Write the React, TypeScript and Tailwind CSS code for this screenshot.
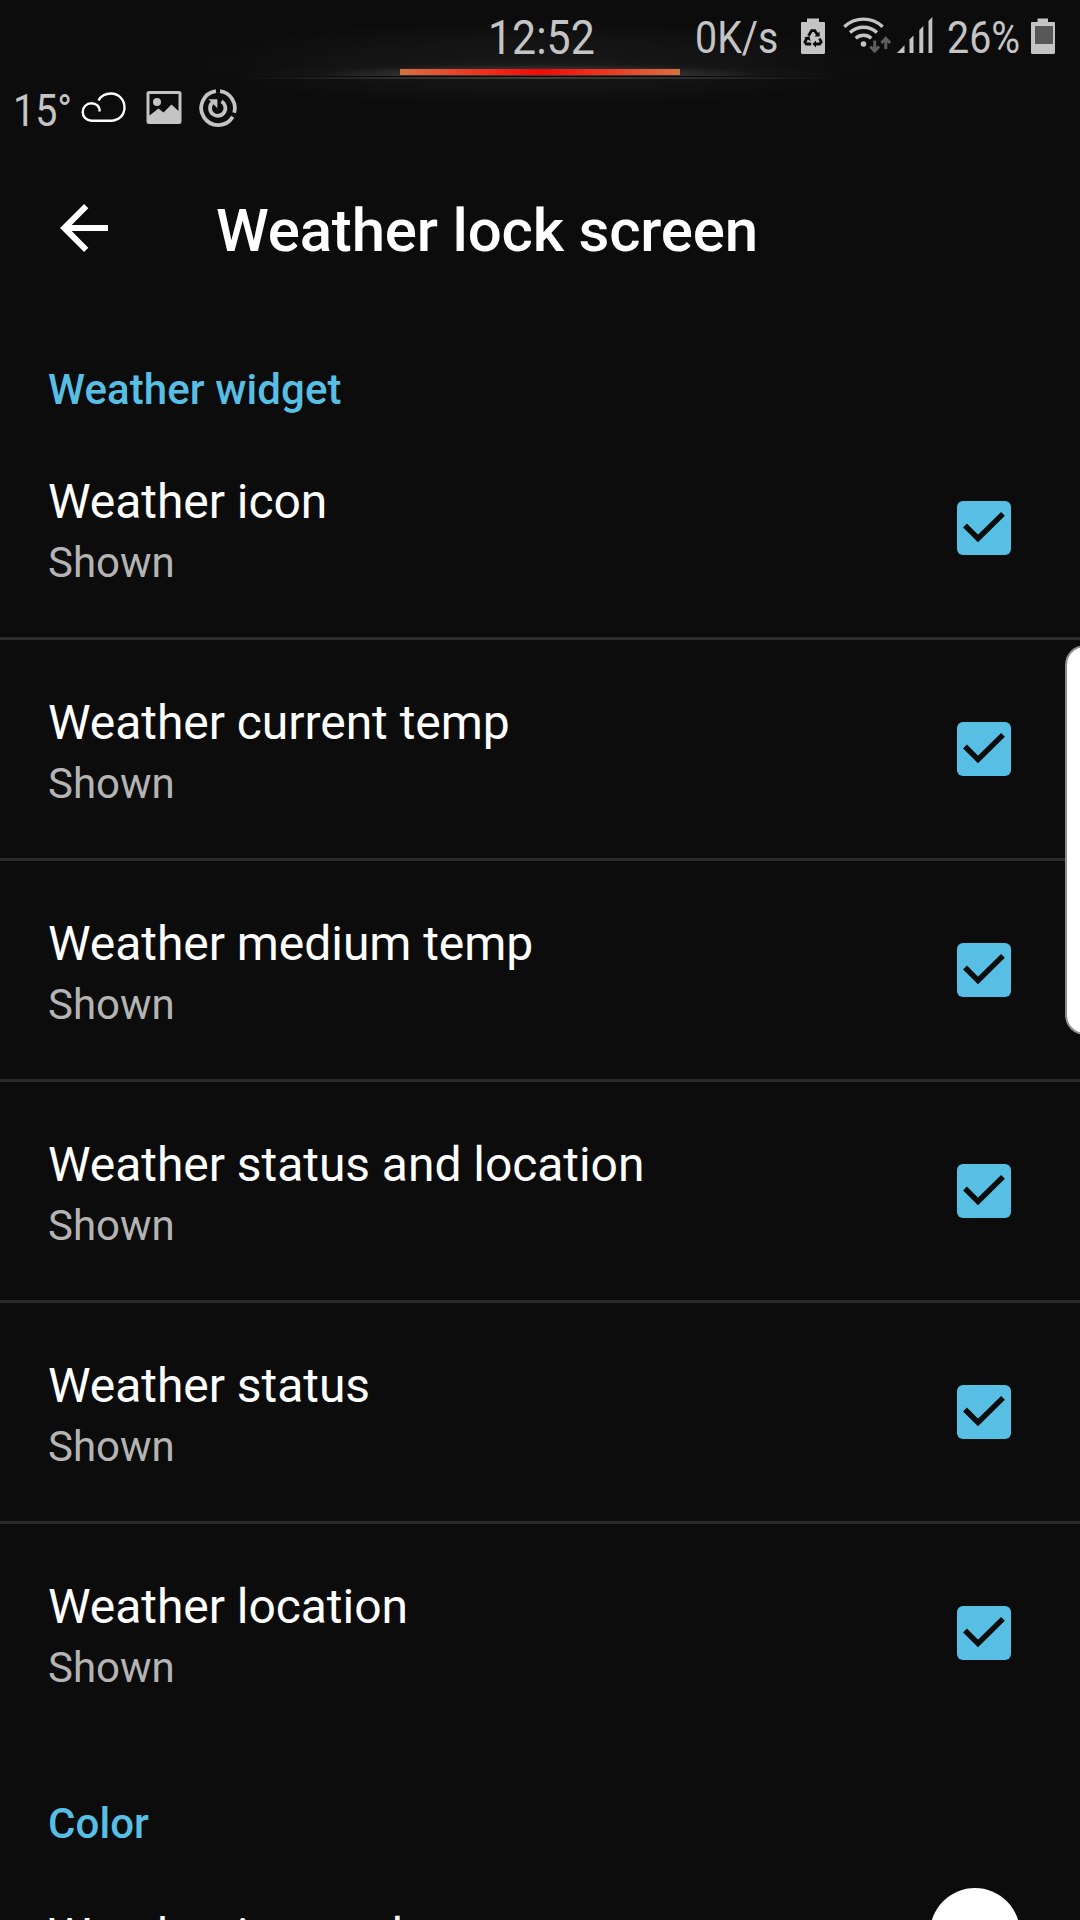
import React from "react";

const WIDGET_ROWS = [
  "Weather icon",
  "Weather current temp",
  "Weather medium temp",
  "Weather status and location",
  "Weather status",
  "Weather location",
];

function CloudIcon() {
  return (
    <svg width="46" height="32" viewBox="0 0 46 32" fill="none" stroke="#fff" strokeWidth="2.400" strokeLinecap="butt">
      <path d="M18.500 19.500C19 14.500 15 11.200 10.500 11.200C5.500 11.200 1.700 15 1.700 20C1.700 25 5.500 28.700 10.500 28.700H30C38 28.700 43.500 23 43.500 15.500C43.500 7.500 37.500 1.500 30 1.500C24.500 1.500 20 4 17.500 8.500" />
    </svg>
  );
}

function PictureIcon() {
  return (
    <svg width="36" height="33" viewBox="0 0 36 33">
      <path
        fill="#c4c4c4"
        fillRule="evenodd"
        d="M3 0H33Q35.500 0 35.500 2.500V30.500Q35.500 33 33 33H3Q.5 33 .5 30.500V2.500Q.5 0 3 0ZM3.500 3V24.500L12.500 17.500L17.500 21.500L25.500 13.500L32.500 20V3Z"
      />
      <circle cx="11" cy="11" r="4" fill="#c4c4c4" />
    </svg>
  );
}

function RestoreIcon() {
  return (
    <svg width="38" height="38" viewBox="0 0 38 38" fill="none" stroke="#c4c4c4">
      <g strokeWidth="3.800">
        <path d="M17 2.200A17 17 0 1 0 33.800 27.800" />
        <path d="M21 2.200A17 17 0 0 1 35.200 23.700" />
        <path d="M13.200 13.800A7.700 7.700 0 1 0 22.500 12.400" />
      </g>
      <path d="M9.500 10.300H18.400V19.200Z" fill="#c4c4c4" stroke="none" />
    </svg>
  );
}

function RecycleBatteryIcon() {
  return (
    <svg width="24" height="36" viewBox="0 0 24 36">
      <path fill="#c4c4c4" d="M6 0.500H18V4H23.200Q24 4 24 4.800V34.500Q24 36 22.500 36H1.500Q0 36 0 34.500V4.800Q0 4 .8 4H6Z" />
      <g fill="none" stroke="#0c0c0c" strokeWidth="2.800">
        <path d="M7.500 17.800L10.600 12.700H13.800L16.600 17" />
        <path d="M18.500 20.500L20.200 24L18.600 26H13.500" />
        <path d="M10.200 26H5.300L3.900 24L6.300 19.500" />
      </g>
      <g fill="#0c0c0c">
        <path d="M13.500 18.500L18.800 18.500L18.500 13.500Z" />
        <path d="M15 22.500V29.500L11.500 26Z" />
        <path d="M3 19.500L8.500 18.200L9.500 23Z" />
      </g>
    </svg>
  );
}

function WifiIcon() {
  return (
    <svg width="50" height="38" viewBox="0 0 50 38" fill="none" stroke="#c4c4c4" strokeWidth="3.300">
      <path d="M1.300 9.700A28 28 0 0 1 39.700 9.700" />
      <path d="M7 15.500A20 20 0 0 1 34 15.500" />
      <path d="M12.700 21.300A11.500 11.500 0 0 1 28.300 21.300" />
      <circle cx="20.500" cy="27" r="2.800" fill="#c4c4c4" stroke="none" />
      <g stroke="#5e5e5e" strokeWidth="3">
        <path d="M31.700 23.500V34M27.300 29.500L31.700 34L36.100 29.500" />
        <path d="M42.800 32V21.500M38.400 26L42.800 21.500L47.200 26" />
      </g>
    </svg>
  );
}

function SignalIcon() {
  return (
    <svg width="36" height="36" viewBox="0 0 36 36" fill="#c4c4c4">
      <path d="M0 36L7.500 28.300V36Z" />
      <path d="M12.500 22.500L16.500 18.500V36H12.500Z" />
      <path d="M22.300 13L26.300 9V36H22.300Z" />
      <path d="M31.500 4L35.300 0V36H31.500Z" />
    </svg>
  );
}

function BatteryIcon() {
  return (
    <svg width="24" height="36" viewBox="0 0 24 36">
      <path fill="#c4c4c4" d="M6.500 0.500H17V4H23.200Q24 4 24 4.800V34.500Q24 36 22.500 36H1.500Q0 36 0 34.500V4.800Q0 4 .8 4H6.500Z" />
      <rect x="4" y="8" width="18" height="18" fill="#585858" />
    </svg>
  );
}

function StatusText({ children, className }: { children: string; className: string }) {
  return (
    <div className={`shrink-0 whitespace-nowrap text-[#c4c4c4] ${className}`}>
      <span className="inline-block origin-left scale-x-[0.875]">{children}</span>
    </div>
  );
}

function StatusBar() {
  return (
    <header className="relative h-[150px]">
      <div className="absolute left-[180px] top-[20px] h-[88px] w-[720px] bg-[radial-gradient(closest-side,#181818_0%,#131313_55%,#0c0c0c00_100%)]" />
      <div className="absolute left-[240px] top-[60px] h-[16px] w-[600px] overflow-hidden">
        <div className="h-[32px] w-full bg-[radial-gradient(closest-side,#3a3a3a_0%,#303030_45%,#1a1a1a88_75%,transparent_100%)]" />
      </div>
      <div className="absolute left-[240px] top-[76px] h-px w-[600px] bg-[linear-gradient(to_right,transparent,#0a0a0a_20%,#0a0a0a_80%,transparent)]" />
      <div className="absolute left-[240px] top-[77px] h-[2px] w-[600px] bg-[linear-gradient(to_right,transparent,#2c2c2c_25%,#403c36_50%,#2c2c2c_75%,transparent)]" />
      <div className="absolute left-[400px] top-[69px] h-[6px] w-[280px] bg-[linear-gradient(to_right,#d8713f,#ee2f1c_30%,#f40808_50%,#ee2f1c_70%,#d8713f)]" />
      <div className="relative flex h-[74px] items-start">
        <StatusText className="ml-[488px] mt-[10px] w-[108px] text-[49px] leading-[56px]">12:52</StatusText>
        <StatusText className="ml-[99px] mt-[10px] w-[106px] text-[45px] leading-[56px]">0K/s</StatusText>
        <div className="mt-[18px] shrink-0"><RecycleBatteryIcon /></div>
        <div className="ml-[18px] mt-[17px] shrink-0"><WifiIcon /></div>
        <div className="ml-[4px] mt-[17px] shrink-0"><SignalIcon /></div>
        <StatusText className="ml-[14px] mt-[10px] w-[84px] text-[45px] leading-[56px]">26%</StatusText>
        <div className="mt-[18px] shrink-0"><BatteryIcon /></div>
      </div>
      <div className="relative flex items-start">
        <StatusText className="ml-[13px] mt-[9px] w-[68px] text-[45px] leading-[56px]">15°</StatusText>
        <div className="mt-[18px]"><CloudIcon /></div>
        <div className="ml-[19px] mt-[17px]"><PictureIcon /></div>
        <div className="ml-[17px] mt-[15px]"><RestoreIcon /></div>
      </div>
    </header>
  );
}

function SectionTitle({ children }: { children: string }) {
  return (
    <h2 className="pl-12 text-[42px] font-medium leading-[50px] tracking-[0.08px] text-[#57bee4]">{children}</h2>
  );
}

function CheckBox() {
  return (
    <div className="h-[54px] w-[54px] rounded-[6px] bg-[#57bee4]">
      <svg width="54" height="54" viewBox="0 0 54 54" fill="none" stroke="#0c0c0c" strokeWidth="5.400">
        <path d="M8 24.500L21 37.500L46 12.800" />
      </svg>
    </div>
  );
}

export default function App() {
  return (
    <main className="relative h-[1920px] w-[1080px] overflow-hidden bg-[#0c0c0c] font-['Roboto',sans-serif] text-white">
      <StatusBar />
      <div className="flex h-[156px] items-center pl-[60px]">
        <svg className="shrink-0" width="48" height="48" viewBox="0 0 48 48" fill="none" stroke="#fff" strokeWidth="6">
          <path d="M48 24H4M26.200 2.200L4.300 24L26.200 45.800" />
        </svg>
        <h1 className="ml-[108px] mt-[6px] text-[60px] font-medium leading-[72px] tracking-[-0.18px]">
          Weather lock screen
        </h1>
      </div>
      <section className="pt-[59px]">
        <SectionTitle>Weather widget</SectionTitle>
        <ul className="mt-[4px]">
          {WIDGET_ROWS.map((title) => (
            <li
              key={title}
              className="flex h-[221px] items-center justify-between border-b-[3px] border-[#2b2b2b] pl-12 pr-[69px] last:h-[218px] last:border-b-0"
            >
              <div className="pt-1.5">
                <div className="text-[48px] leading-[64px] tracking-[-0.05px]">{title}</div>
                <div className="text-[42px] leading-[58px] text-[#b4b4b4]">Shown</div>
              </div>
              <CheckBox />
            </li>
          ))}
        </ul>
      </section>
      <section className="pt-[57px]">
        <SectionTitle>Color</SectionTitle>
        <div className="mt-[4px] flex h-[160px] items-center justify-between pl-12 pr-[60px]">
          <div className="pt-[5px] text-[48px] leading-[64px] tracking-[-0.05px]">Weather icon color</div>
          <div className="h-[90px] w-[90px] rounded-full bg-white" />
        </div>
      </section>
      <div className="absolute -right-[5px] top-[645px] h-[390px] w-[20px] rounded-l-[20px] border-2 border-r-0 border-[#8e8e8e] bg-white" />
    </main>
  );
}
